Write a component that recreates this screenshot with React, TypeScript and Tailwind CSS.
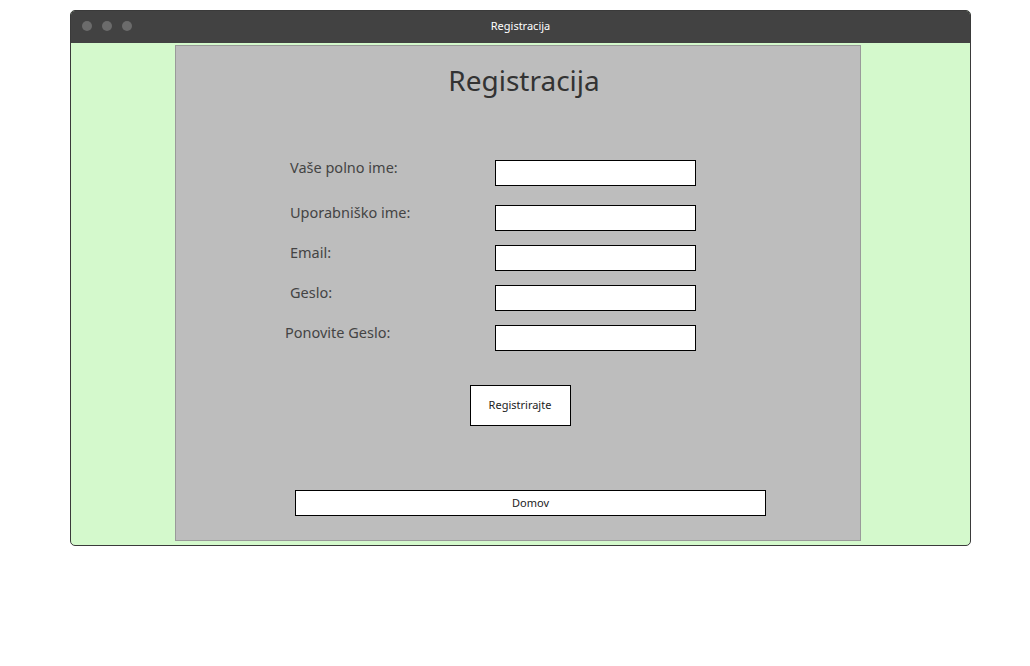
const fields = [
  { label: "Vaše polno ime:", top: "mt-[114px]", shift: "pl-[114px]", width: "w-[205px]" },
  { label: "Uporabniško ime:", top: "mt-[19px]", shift: "pl-[114px]", width: "w-[205px]" },
  { label: "Email:", top: "mt-[14px]", shift: "pl-[114px]", width: "w-[205px]" },
  { label: "Geslo:", top: "mt-[14px]", shift: "pl-[114px]", width: "w-[205px]" },
  { label: "Ponovite Geslo:", top: "mt-[14px]", shift: "pl-[109px]", width: "w-[210px]" },
];

const App = () => {
  return (
    <div className="w-[1030px] h-[666px] bg-white pt-[10px] pl-[70px] font-['Noto_Sans',sans-serif]">
      <div className="w-[901px] h-[536px] flex flex-col rounded-[5px] border border-[#3a3a3a] overflow-hidden bg-[#d4f9cc]">
        <div className="relative h-[32px] bg-[#424242] flex items-center justify-center shrink-0">
          <div className="absolute left-[11px] top-[10px] flex gap-[10px]">
            <div className="w-[10px] h-[10px] rounded-full bg-[#6b6b6b]"></div>
            <div className="w-[10px] h-[10px] rounded-full bg-[#6b6b6b]"></div>
            <div className="w-[10px] h-[10px] rounded-full bg-[#6b6b6b]"></div>
          </div>
          <span className="text-white text-[11px] -mt-[1px]">Registracija</span>
        </div>
        <div className="flex-1 pl-[104px] pt-[2px]">
          <div className="relative w-[686px] h-[496px] bg-[#bdbdbd] border border-[#9a9a9a] flex flex-col">
            <h1 className="absolute left-0 right-0 top-[14px] text-center pl-[12px] text-[28px] leading-[40px] text-[#333]">
              Registracija
            </h1>
            {fields.map((f) => (
              <div key={f.label} className={`flex items-start ${f.top} ${f.shift}`}>
                <span className={`${f.width} text-[14.5px] leading-[20px] -mt-[3px] text-[#444]`}>
                  {f.label}
                </span>
                <div className="w-[201px] h-[26px] bg-white border border-black"></div>
              </div>
            ))}
            <div className="flex justify-center mt-[34px] pl-[4px]">
              <button className="w-[101px] h-[41px] bg-white border border-black text-[11px] text-[#222]">
                Registrirajte
              </button>
            </div>
            <div className="mt-[63px] pl-[119px]">
              <button className="w-[471px] h-[26px] bg-white border border-black text-[11px] text-[#222]">
                Domov
              </button>
            </div>
          </div>
        </div>
      </div>
    </div>
  );
};

export default App;
